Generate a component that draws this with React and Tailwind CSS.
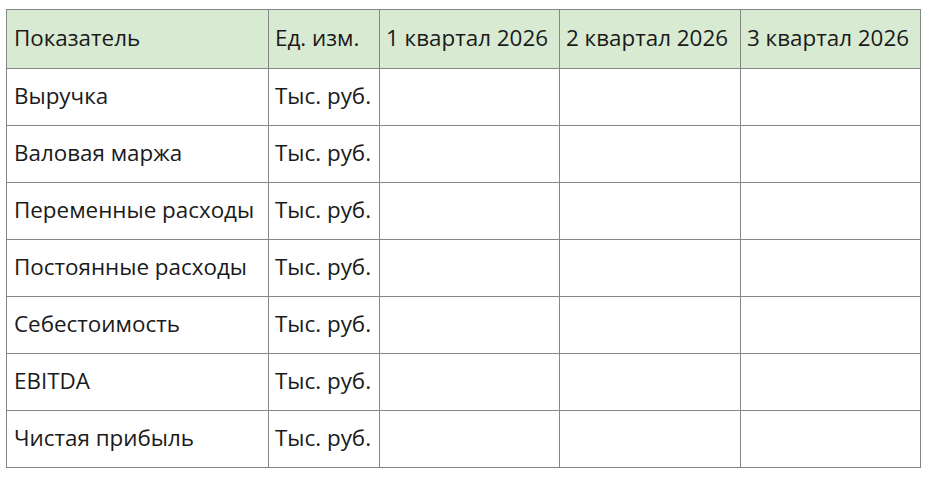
const rows = [
  "Выручка",
  "Валовая маржа",
  "Переменные расходы",
  "Постоянные расходы",
  "Себестоимость",
  "EBITDA",
  "Чистая прибыль",
];

const quarters = ["1 квартал", "2 квартал", "3 квартал"];

export default function App() {
  return (
    <div className="bg-white w-[934px] h-[482px] pl-[6px] pt-[9px] font-['Open_Sans',sans-serif] text-[22.4px] leading-[30px] text-[#1a1a1a]">
      <table className="border-collapse table-fixed w-[915px]">
        <colgroup>
          <col className="w-[262px]" />
          <col className="w-[111px]" />
          <col className="w-[180px]" />
          <col className="w-[181px]" />
          <col className="w-[180px]" />
        </colgroup>
        <thead>
          <tr className="bg-[#d9ead3] h-[59px]">
            <th className="border border-[#858585] text-left font-normal pl-[7px] pr-0 pb-[3px] whitespace-nowrap">Показатель</th>
            <th className="border border-[#858585] text-left font-normal pl-[6px] pr-0 pb-[3px] whitespace-nowrap">Ед. изм.</th>
            {quarters.map((q) => (
              <th key={q} className="border border-[#858585] text-left font-normal pl-[6px] pr-0 pb-[3px] whitespace-nowrap">
                {q} 2026
              </th>
            ))}
          </tr>
        </thead>
        <tbody>
          {rows.map((r) => (
            <tr key={r} className="h-[57px]">
              <td className="border border-[#858585] pl-[7px] pb-[3px] whitespace-nowrap">{r}</td>
              <td className="border border-[#858585] pl-[6px] pb-[3px] whitespace-nowrap">Тыс. руб.</td>
              <td className="border border-[#858585]"></td>
              <td className="border border-[#858585]"></td>
              <td className="border border-[#858585]"></td>
            </tr>
          ))}
        </tbody>
      </table>
    </div>
  );
}
